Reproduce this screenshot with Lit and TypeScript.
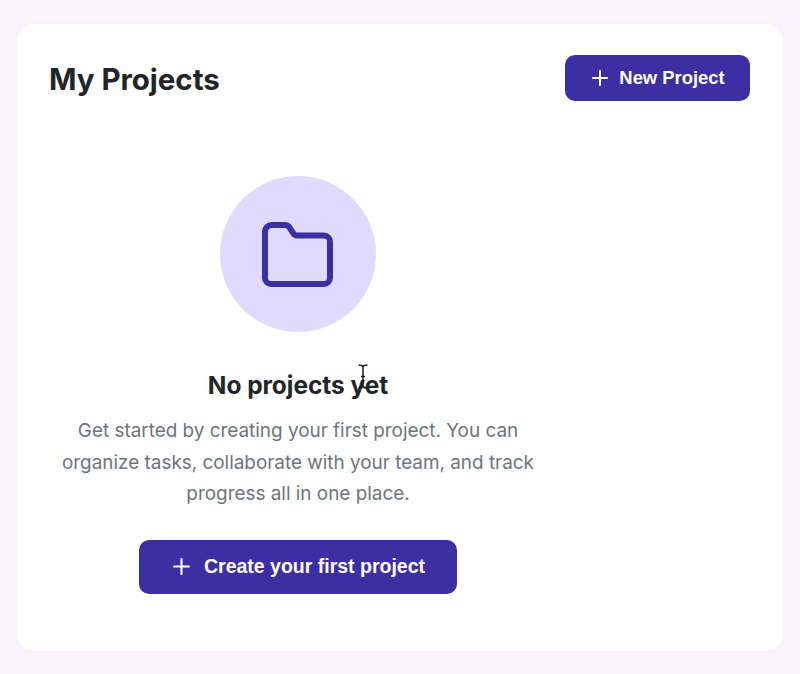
import { LitElement, html, css } from 'lit';
import { customElement } from 'lit/decorators.js';

const plusIcon = (size: number) => html`<svg class="plus" width=${size} height=${size} viewBox="0 0 16 16" fill="none" stroke="currentColor" stroke-width="2" stroke-linecap="round"><path d="M8 1v14M1 8h14"/></svg>`;

@customElement('app-root')
export class AppRoot extends LitElement {
  static override styles = css`
    :host {
      display: block;
      box-sizing: border-box;
      height: 674px;
      padding: 24px 17px 23px;
      background: #faf5fc;
      font-family: Inter, "Liberation Sans", sans-serif;
      color: #212529;
    }

    .card {
      position: relative;
      box-sizing: border-box;
      height: 627px;
      padding: 31px 33px 0 32px;
      background: #fff;
      border-radius: 16px;
      box-shadow: 0 0 3px rgba(60, 40, 120, 0.05);
    }

    .header {
      display: flex;
      justify-content: space-between;
      align-items: center;
      height: 46px;
    }

    h1 {
      margin: 2px 0 0;
      font-size: 29.500px;
      line-height: 46px;
      font-weight: 700;
      letter-spacing: -0.03px;
    }

    .btn {
      display: flex;
      align-items: center;
      justify-content: center;
      box-sizing: border-box;
      border: 0;
      padding: 0 0 0 2px;
      background: #3c2fa3;
      color: #fff;
      font-family: "Liberation Sans", Arial, sans-serif;
      font-weight: 700;
    }

    .btn-small {
      width: 185px;
      height: 46px;
      gap: 11px;
      border-radius: 10px;
      font-size: 18.400px;
    }

    .btn-large {
      width: 318px;
      height: 54px;
      gap: 14px;
      border-radius: 10px;
      font-size: 19.500px;
    }

    .empty {
      display: flex;
      flex-direction: column;
      align-items: center;
      width: 498px;
      padding-top: 75px;
    }

    .circle {
      display: flex;
      align-items: center;
      justify-content: center;
      width: 156px;
      height: 156px;
      border-radius: 50%;
      background: #e0dbfd;
    }

    .folder {
      margin-left: -1px;
    }

    h2 {
      margin: 36px 0 0;
      font-size: 24.500px;
      line-height: 34px;
      font-weight: 700;
      letter-spacing: -0.06px;
    }

    p {
      margin: 13px 0 0;
      width: 492px;
      text-align: center;
      font-size: 18.900px;
      line-height: 31.500px;
      color: #6c757d;
    }

    .empty .btn {
      margin-top: 30px;
    }

    .cursor {
      position: absolute;
      left: 341px;
      top: 340px;
    }
  `;

  override render() {
    return html`
      <div class="card">
        <div class="header">
          <h1>My Projects</h1>
          <button class="btn btn-small">${plusIcon(16)}New Project</button>
        </div>
        <div class="empty">
          <div class="circle">
            <svg class="folder" width="71" height="65" viewBox="0 0 71 65" fill="none" stroke="#3c2fa3" stroke-width="6" stroke-linejoin="round">
              <path d="M3 9.800a6.800 6.800 0 0 1 6.800-6.800h13.500c1.500 0 2.800.6 3.700 1.800l4.500 6.900c.8 1.200 1.800 1.800 3 1.800h27.500a6 6 0 0 1 6 6v36.500a6 6 0 0 1-6 6H9a6 6 0 0 1-6-6z"/>
            </svg>
          </div>
          <h2>No projects yet</h2>
          <p>Get started by creating your first project. You can organize tasks, collaborate with your team, and track progress all in one place.</p>
          <button class="btn btn-large">${plusIcon(17)}Create your first project</button>
        </div>
        <svg class="cursor" width="10" height="25" viewBox="0 0 10 25" fill="none" stroke="#1c1c1c" stroke-width="1.500">
          <path d="M.5 1c2.200 0 3.900.5 4.500 1.500C5.600 1.500 7.300 1 9.500 1M5 2.500v20M.5 24c2.200 0 3.900-.5 4.500-1.500.6 1 2.300 1.500 4.500 1.500M3 12.500h4"/>
        </svg>
      </div>
    `;
  }
}
